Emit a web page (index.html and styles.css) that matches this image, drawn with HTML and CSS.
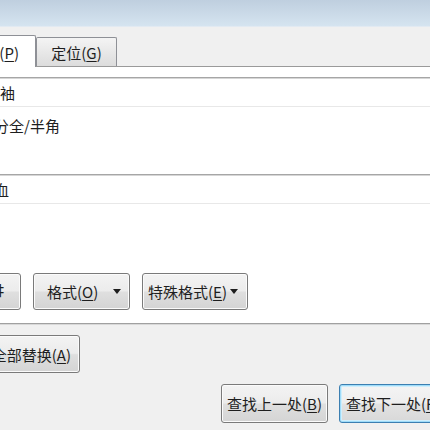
FILE: index.html
```html
<!DOCTYPE html>
<html lang="zh-CN">
<head>
<meta charset="utf-8">
<title>查找和替换</title>
<link rel="stylesheet" href="styles.css">
</head>
<body>
<div class="dialog">
  <div class="titlebar"></div>
  <div class="tabstrip">
    <div class="tab active">替换(<u>P</u>)</div>
    <div class="tab">定位(<u>G</u>)</div>
  </div>
  <div class="panel">
    <div class="field"><span class="val v1">袖</span></div>
    <div class="option"><span class="opt">区分全/半角</span></div>
    <div class="field field2"><span class="val v2">长血</span></div>
    <div class="btnrow">
      <button class="btn b1"><span class="frag">高级搜索(M) ‡</span></button>
      <button class="btn b2"><span>格式(<u>O</u>)</span><svg class="arrow" width="8" height="5" viewBox="0 0 8 5"><path d="M0 0H8L4 5Z" fill="#1e1e1e"/></svg></button>
      <button class="btn b3"><span>特殊格式(<u>E</u>)</span><svg class="arrow" width="8" height="5" viewBox="0 0 8 5"><path d="M0 0H8L4 5Z" fill="#1e1e1e"/></svg></button>
    </div>
  </div>
  <div class="lower">
    <div class="row"><button class="btn b4">全部替换(<u>A</u>)</button></div>
    <div class="row bottom">
      <button class="btn b5">查找上一处(<u>B</u>)</button>
      <button class="btn b6 focus">查找下一处(<u>F</u>)</button>
    </div>
  </div>
</div>
</body>
</html>
```
FILE: styles.css
```css
html, body {
  margin: 0;
  padding: 0;
}
body {
  width: 430px;
  height: 430px;
  overflow: hidden;
  background: #f0f0f0;
  font-family: "Noto Sans CJK SC", "Noto Sans", sans-serif;
  font-size: 15px;
  color: #1e1e1e;
}
.dialog {
  width: 430px;
  height: 430px;
  overflow: hidden;
}
.titlebar {
  height: 26px;
  background: linear-gradient(#bfcfdf, #d5e4f0);
  border-bottom: 1px solid #e2eaf2;
}
.tabstrip {
  height: 39px;
  display: flex;
  align-items: flex-end;
  border-bottom: 1px solid #9a9a9a;
  position: relative;
}
.tab {
  box-sizing: border-box;
  height: 29px;
  width: 81px;
  display: flex;
  align-items: center;
  justify-content: center;
  border: 1px solid #8e9096;
  border-bottom: none;
  background: linear-gradient(#f4f4f4, #dcdcdc);
  border-radius: 2px 2px 0 0;
  line-height: 1;
}
.tab.active {
  width: 106px;
  margin-left: -70px;
  height: 32px;
  margin-bottom: -1px;
  background: #ffffff;
  justify-content: flex-end;
  padding-right: 16px;
  padding-top: 2px;
  z-index: 1;
}
u {
  text-decoration: underline;
  text-underline-offset: 2px;
  text-decoration-thickness: 1px;
}
.panel {
  background: #ffffff;
  padding-top: 10px;
  padding-bottom: 13px;
  border-bottom: 1px solid #a0a0a0;
  box-shadow: 0 1px 0 #d8d8d8;
}
.field {
  height: 28px;
  border-top: 1px solid #a6a6a6;
  border-bottom: 1px solid #e8e8e8;
  display: flex;
  align-items: center;
  box-shadow: inset 0 1px 0 #d6d6d6;
}
.val {
  line-height: 1;
}
.v2 {
  margin-left: -21px;
}
.option {
  height: 22px;
  margin-top: 7px;
  display: flex;
  align-items: center;
}
.opt {
  margin-left: -21px;
  line-height: 1;
}
.field2 {
  margin-top: 38px;
}
.btnrow {
  margin-top: 69px;
  display: flex;
  gap: 12px;
  height: 37px;
}
.btn {
  box-sizing: border-box;
  height: 37px;
  border: 1px solid #7a7a7a;
  border-radius: 3px;
  background: linear-gradient(#f3f3f3 0%, #ececec 48%, #dfdfdf 52%, #d4d4d4 100%);
  box-shadow: inset 0 0 0 1px #fbfbfb;
  font-family: inherit;
  font-size: 15px;
  color: #1e1e1e;
  padding: 0;
  display: flex;
  align-items: center;
  white-space: nowrap;
  flex: none;
  line-height: 1;
}
.b1 {
  width: 100px;
  margin-left: -79px;
  justify-content: flex-end;
  padding-right: 16px;
  overflow: hidden;
}
.frag {
  font-family: "DejaVu Sans", sans-serif;
}
.b2 {
  width: 97px;
  padding-left: 13px;
}
.b2 .arrow {
  margin-left: 15px;
}
.b3 {
  width: 106px;
  padding-left: 5px;
}
.b3 .arrow {
  margin-left: 3px;
}
.lower {
  padding-top: 11px;
}
.row {
  display: flex;
}
.b4 {
  height: 38px;
  width: 98px;
  margin-left: -18px;
  justify-content: flex-end;
  padding-right: 8px;
}
.bottom {
  margin-top: 11px;
  padding-left: 221px;
  gap: 11px;
}
.b5, .b6 {
  height: 39px;
  width: 107px;
  justify-content: center;
}
.b6 {
  width: 110px;
  justify-content: flex-start;
  padding-left: 6px;
}
.focus {
  border-color: #3c7fb1;
  box-shadow: inset 0 0 0 1px #9fdcf9, inset 0 0 0 2px #cfeefc;
  background: linear-gradient(#f4f4f4 0%, #eeeeee 48%, #e2e2e2 52%, #d8d8d8 100%);
}
```
